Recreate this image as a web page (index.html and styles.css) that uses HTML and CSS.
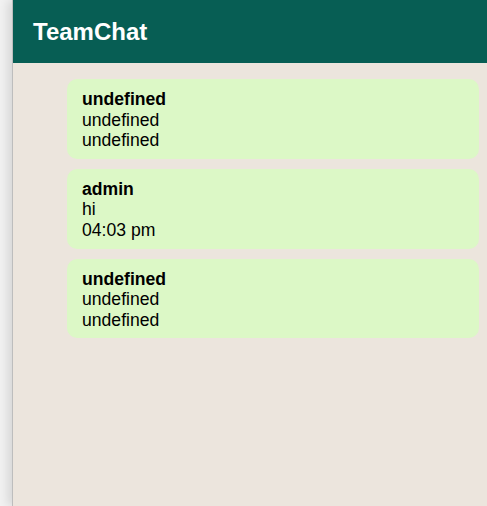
FILE: index.html
```html
<!DOCTYPE html>
<html>
<head>
<meta charset="utf-8">
<link rel="stylesheet" href="styles.css">
</head>
<body>
<div class="app">
  <header class="header"><h1 class="title">TeamChat</h1></header>
  <main class="messages">
    <div class="bubble">
      <div class="user">undefined</div>
      <div class="text">undefined</div>
      <div class="time">undefined</div>
    </div>
    <div class="bubble">
      <div class="user">admin</div>
      <div class="text">hi</div>
      <div class="time">04:03 pm</div>
    </div>
    <div class="bubble">
      <div class="user">undefined</div>
      <div class="text">undefined</div>
      <div class="time">undefined</div>
    </div>
  </main>
</div>
</body>
</html>
```

FILE: styles.css
```css
html, body {
  margin: 0;
  padding: 0;
  height: 100%;
}
body {
  background: #f2f2f2;
  font-family: "Liberation Sans", Arial, sans-serif;
  overflow: hidden;
}
.app {
  margin-left: 12px;
  height: 100%;
  background: #ece5dd;
  border-left: 1px solid #bdbdbd;
  box-shadow: -4px 0 10px rgba(0, 0, 0, 0.12);
  display: flex;
  flex-direction: column;
}
.header {
  height: 63px;
  background: #075e54;
  display: flex;
  align-items: center;
  padding-left: 20px;
  flex-shrink: 0;
}
.title {
  margin: 0;
  color: #ffffff;
  font-size: 24px;
  font-weight: bold;
}
.messages {
  padding: 16px 8px 0 54px;
  display: flex;
  flex-direction: column;
  gap: 10px;
}
.bubble {
  background: #dcf8c6;
  border-radius: 10px;
  padding: 10px 15px 8px;
  font-size: 17.6px;
  line-height: 20.6px;
  color: #000;
}
.user {
  font-weight: bold;
}
```
